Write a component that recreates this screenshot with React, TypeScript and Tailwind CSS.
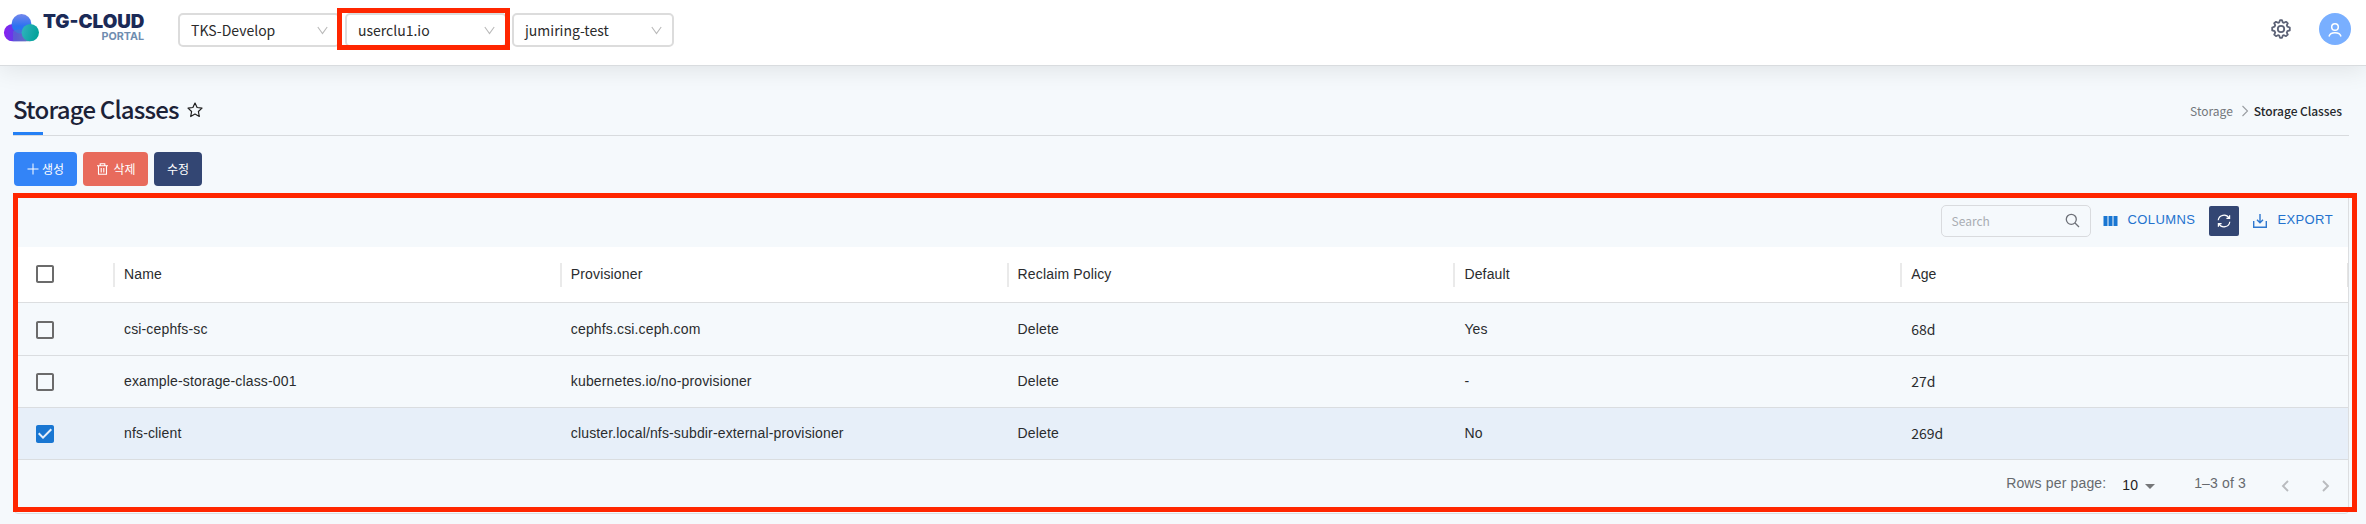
import type { ReactNode } from "react";

const SANS_KR = "font-['Noto_Sans_CJK_KR',sans-serif]";

type StorageClass = {
  name: string;
  provisioner: string;
  reclaimPolicy: string;
  isDefault: string;
  age: string;
  selected?: boolean;
};

const storageClasses: StorageClass[] = [
  { name: "csi-cephfs-sc", provisioner: "cephfs.csi.ceph.com", reclaimPolicy: "Delete", isDefault: "Yes", age: "68d" },
  { name: "example-storage-class-001", provisioner: "kubernetes.io/no-provisioner", reclaimPolicy: "Delete", isDefault: "-", age: "27d" },
  { name: "nfs-client", provisioner: "cluster.local/nfs-subdir-external-provisioner", reclaimPolicy: "Delete", isDefault: "No", age: "269d", selected: true },
];

const columns = ["Name", "Provisioner", "Reclaim Policy", "Default", "Age"];

function Logo() {
  return (
    <svg width="145" height="32" viewBox="0 0 145 32" className="shrink-0">
      <defs>
        <linearGradient id="cloudTop" x1="0" y1="0" x2="0" y2="1">
          <stop offset="0" stopColor="#7488ec" />
          <stop offset="0.6" stopColor="#2d72f0" />
          <stop offset="1" stopColor="#1f7cf5" />
        </linearGradient>
        <linearGradient id="cloudLeft" x1="0" y1="0" x2="1" y2="0">
          <stop offset="0" stopColor="#8a1ff0" />
          <stop offset="0.45" stopColor="#5b3fe8" />
          <stop offset="1" stopColor="#6a7fb0" />
        </linearGradient>
        <linearGradient id="cloudRight" x1="0" y1="0" x2="1" y2="0.3">
          <stop offset="0" stopColor="#35b3c0" />
          <stop offset="1" stopColor="#04a39b" />
        </linearGradient>
      </defs>
      <path d="M12.500 14h17.500v17.200H12.500a8.600 8.600 0 0 1 0-17.200z" fill="url(#cloudLeft)" />
      <circle cx="21.500" cy="13.900" r="9.900" fill="url(#cloudTop)" />
      <path d="M13 31.200V21.500c3-3.500 13-2.500 13 4v5.700z" fill="#5f6fc4" opacity="0.55" />
      <circle cx="30.300" cy="22.600" r="8.700" fill="url(#cloudRight)" />
      <text x="43" y="18.400" textLength="101.500" lengthAdjust="spacingAndGlyphs" fontSize="18.500" fontWeight="900" fill="#1b2a57" className="font-['Inter',sans-serif]">
        TG-CLOUD
      </text>
      <text x="101.500" y="30" textLength="42.500" lengthAdjust="spacingAndGlyphs" fontSize="11" fontWeight="700" fill="#6f8db0" className="font-['Inter',sans-serif]">
        PORTAL
      </text>
    </svg>
  );
}

function Select({ value }: { value: string }) {
  return (
    <div className="flex h-[34px] w-[162px] items-center justify-between rounded-[5px] border-2 border-[#dcdcdc] bg-white pr-[10px] pl-[11px] text-sm text-[#2b2b2b]">
      <span className="leading-[30px]">{value}</span>
      <svg width="11" height="9" viewBox="0 0 11 9" fill="none" stroke="#b9b9b9" strokeWidth="1.1">
        <path d="M0.8 1 5.5 7.6 10.2 1" />
      </svg>
    </div>
  );
}

function ActionButton({ className, children }: { className: string; children: ReactNode }) {
  return (
    <button className={`flex h-[34px] items-center justify-center rounded text-xs text-white ${className}`}>{children}</button>
  );
}

function Checkbox({ checked }: { checked?: boolean }) {
  return (
    <svg width="24" height="24" viewBox="0 0 24 24" fill={checked ? "#1976d2" : "#6b6b6b"}>
      {checked ? (
        <path d="M19 3H5c-1.11 0-2 .9-2 2v14c0 1.1.89 2 2 2h14c1.11 0 2-.9 2-2V5c0-1.1-.89-2-2-2zm-9 14l-5-5 1.41-1.41L10 14.17l7.59-7.59L19 8l-9 9z" />
      ) : (
        <path d="M19 5v14H5V5h14m0-2H5c-1.1 0-2 .9-2 2v14c0 1.1.9 2 2 2h14c1.1 0 2-.9 2-2V5c0-1.1-.9-2-2-2z" />
      )}
    </svg>
  );
}

function Header() {
  return (
    <header className="relative flex h-[66px] items-start justify-between border-b border-[#d9dcdf] bg-white shadow-[0_4px_24px_rgba(0,0,0,0.09)]">
      <div className="flex items-start">
        <div className="w-[178px] pt-[10px]">
          <Logo />
        </div>
        <div className="flex gap-[5px] pt-[13px]">
          <Select value="TKS-Develop" />
          <Select value="userclu1.io" />
          <Select value="jumiring-test" />
        </div>
      </div>
      <div className="flex items-center pt-[13px] pr-[15px]">
        <svg width="20" height="20" viewBox="0 0 20 20" fill="none" stroke="#5d6377" strokeWidth="1.8" strokeLinejoin="round" className="mr-7">
          <path d="M8.300 3.300 9 1.200h2l.7 2.100 1.300.5 2-1 .8.500 1 1-1 1.900.6 1.500 2.400.8v2.900l-2.400.8-.6 1.500 1 1.900-1.800 1.600-2-1-1.300.500-.7 2.100H9l-.7-2.100-1.300-.500-2 1-1.800-1.600 1-1.900-.6-1.500-2.400-.8V8.500l2.400-.8.600-1.500-1-1.900L5 2.800l2 1z" />
          <circle cx="10" cy="10" r="3.200" />
        </svg>
        <div className="flex size-8 items-center justify-center rounded-full bg-[#79afff]">
          <svg width="16" height="16" viewBox="0 0 16 16" fill="none" stroke="#fff" strokeWidth="1.5" className="mt-px">
            <circle cx="8" cy="5" r="3.3" />
            <path d="M2 14.500c.6-2.400 2.700-3.700 6-3.700s5.400 1.300 6 3.700" />
          </svg>
        </div>
      </div>
    </header>
  );
}

function TitleBar() {
  return (
    <div className="mr-[17px] ml-[13px] flex h-[70px] items-end justify-between border-b border-[#d8dbde]">
      <div className="relative flex h-[52px] items-center">
        <h1 className="text-2xl leading-8 font-medium tracking-[-0.8px] text-[#1c2237]">Storage Classes</h1>
        <svg width="16" height="16" viewBox="0 0 16 16" fill="none" stroke="#1e1e1e" strokeWidth="1.2" strokeLinejoin="round" className="mt-[2px] ml-2">
          <path d="M8 1l2.100 4.500 4.900.6-3.600 3.400.9 5L8 12.100l-4.300 2.400.9-5L1 6.100l4.900-.6z" />
        </svg>
        <div className="absolute bottom-0 left-0 h-[3px] w-[30px] bg-[#2480f5]" />
      </div>
      <nav className="flex h-[48px] items-center pr-[7px] text-xs">
        <span className="text-[#73777b]">Storage</span>
        <svg width="8" height="12" viewBox="0 0 8 12" fill="none" stroke="#9a9da1" strokeWidth="1.100" className="mr-[5px] ml-2">
          <path d="M1.500 1 6.500 6 1.500 11" />
        </svg>
        <span className="font-medium tracking-[-0.05px] text-[#26282b]">Storage Classes</span>
      </nav>
    </div>
  );
}

function Toolbar() {
  return (
    <div className="flex h-[54px] items-start pt-[12px] pr-[15px]">
      <div className={`ml-auto flex h-8 w-[150px] items-center justify-between rounded-[5px] border border-[#d9dbde] px-[10px] ${SANS_KR}`}>
        <span className="text-xs text-[#a9adb3]">Search</span>
        <svg width="15" height="15" viewBox="0 0 15 15" fill="none" stroke="#6d7078" strokeWidth="1.3" className="-mt-[2px]">
          <circle cx="6.300" cy="6.300" r="5" />
          <path d="M10 10l4 4" />
        </svg>
      </div>
      <div className="mt-[2px] ml-[12px] flex h-[25px] items-center text-[13px] tracking-[0.4px] text-[#2372ce]">
        <svg width="15" height="10" viewBox="0 0 15 10" fill="#1976d2" className="mt-[2px] mr-[10px]">
          <path d="M.5 0h4v10h-4zM5.500 0h4v10h-4zM10.500 0h4v10h-4z" />
        </svg>
        COLUMNS
      </div>
      <button className="mt-px ml-[14px] flex size-[30px] items-center justify-center rounded-[2px] bg-[#334673]">
        <svg width="14" height="14" viewBox="0 0 14 14" fill="none" stroke="#fff" strokeWidth="1.2">
          <path d="M1.200 6.300A5.800 5.800 0 0 1 12 4.100M12.800 7.700A5.800 5.800 0 0 1 2 9.900" />
          <path d="M12.600 1.200v3.200H9.400M1.400 12.800V9.600h3.200" />
        </svg>
      </button>
      <div className="mt-[2px] ml-[14px] flex h-[25px] items-center text-[13px] tracking-[0.4px] text-[#2372ce]">
        <svg width="14" height="14" viewBox="0 0 14 14" fill="none" stroke="#2f78cf" strokeWidth="1.400" className="mt-[2px] mr-[10px]">
          <path d="M.7 7v6.200h12.600V7" />
          <path d="M7 0v8.500M4 5.700 7 8.700l3-3" />
        </svg>
        EXPORT
      </div>
    </div>
  );
}

function Table() {
  return (
    <div className="text-sm tracking-[0.15px] text-[#2a2c2e]">
      <div className="flex h-[56px] items-center border-b border-[#dcdee0] bg-white">
        <div className="flex w-[96px] pb-px pl-[16px]">
          <Checkbox />
        </div>
        {columns.map((label) => (
          <div key={label} className="flex h-6 w-[446.800px] items-center border-l-2 border-[#eaeaea] pb-[2px] pl-[9px]">
            {label}
          </div>
        ))}
        <div className="h-6 w-px bg-[#e4e4e4]" />
      </div>
      {storageClasses.map((row, index) => (
        <div key={row.name} className={`flex items-center border-b border-[#dadde0] ${index === 0 ? "h-[53px] pt-px" : "h-[52px]"} ${row.selected ? "bg-[#e7eff9]" : ""}`}>
          <div className="flex w-[96px] pt-px pl-[16px]">
            <Checkbox checked={row.selected} />
          </div>
          <div className="w-[446.800px] pb-[2px] pl-[11px]">{row.name}</div>
          <div className="w-[446.800px] pb-[2px] pl-[11px]">{row.provisioner}</div>
          <div className="w-[446.800px] pb-[2px] pl-[11px]">{row.reclaimPolicy}</div>
          <div className="w-[446.800px] pb-[2px] pl-[11px]">{row.isDefault}</div>
          <div className={`w-[400px] pb-[2px] pl-[11px] tracking-normal ${SANS_KR}`}>{row.age}</div>
        </div>
      ))}
    </div>
  );
}

function Pagination() {
  return (
    <div className="flex h-[52px] items-start justify-end pr-[18px] text-sm tracking-[0.15px] text-[#666a6e]">
      <span className="pt-[13px] leading-5">Rows per page:</span>
      <span className="ml-[16px] pt-[15px] leading-5 text-[#1f2123]">10</span>
      <svg width="10" height="5" viewBox="0 0 10 5" fill="#757779" className="mt-[24px] ml-[7px]">
        <path d="M0 0h10L5 5z" />
      </svg>
      <span className="ml-[39px] pt-[13px] leading-5">1–3 of 3</span>
      <svg width="8" height="12" viewBox="0 0 8 12" fill="none" stroke="#b9bbbe" strokeWidth="1.900" className="mt-[20px] ml-[35px]">
        <path d="M7 1 2 6l5 5" />
      </svg>
      <svg width="8" height="12" viewBox="0 0 8 12" fill="none" stroke="#b9bbbe" strokeWidth="1.900" className="mt-[20px] ml-[33px]">
        <path d="M1 1l5 5-5 5" />
      </svg>
    </div>
  );
}

export default function App() {
  return (
    <div className={`relative h-[524px] w-[2366px] overflow-hidden bg-[#f5f9fc] ${SANS_KR}`}>
      <Header />
      <TitleBar />
      <div className="flex gap-[6px] pt-4 pl-[14px]">
        <ActionButton className="w-[63px] gap-[3px] bg-[#3384f7]">
          <svg width="12" height="12" viewBox="0 0 12 12" stroke="#fff" strokeWidth="1">
            <path d="M6 .5v11M.5 6h11" />
          </svg>
          생성
        </ActionButton>
        <ActionButton className="w-[65px] gap-[5px] bg-[#e86b5c] pl-[2px]">
          <svg width="11" height="12" viewBox="0 0 11 12" fill="none" stroke="#fff" strokeWidth="1.100">
            <path d="M0 2.700h11M3.200 2.500V.7h4.600v1.800M1.500 3v8.300h8V3M4.200 5v4.500M6.800 5v4.500" />
          </svg>
          삭제
        </ActionButton>
        <ActionButton className="w-12 bg-[#334673]">수정</ActionButton>
      </div>
      <div className="mt-[7px] mr-[17px] ml-[14px] h-[321px] rounded border border-[#dcdee0] font-['Liberation_Sans',sans-serif]">
        <div className="-mt-px ml-[2px]">
          <Toolbar />
          <Table />
          <Pagination />
        </div>
      </div>
      <div className="absolute top-[8px] left-[337px] h-[42px] w-[173px] border-5 border-[#ff2600]" />
      <div className="absolute top-[193px] left-[13px] h-[319px] w-[2344px] border-5 border-[#ff2600]" />
    </div>
  );
}
